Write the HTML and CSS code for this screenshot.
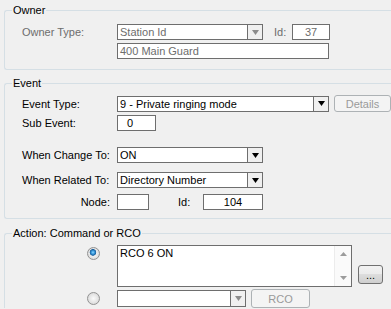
FILE: index.html
```html
<!DOCTYPE html>
<html>
<head>
<title>Event Action</title>
<link rel="stylesheet" href="styles.css">
</head>
<body>
<fieldset class="group owner">
	<legend>Owner</legend>
	<div class="row">
		<span class="label off">Owner Type:</span>
		<div class="combo off w146">
			<span class="val">Station Id</span>
			<span class="arrow"><svg width="7" height="5" viewBox="0 0 7 5"><polygon points="0,0 7,0 3.5,5"/></svg></span>
		</div>
		<span class="idlbl off">Id:</span>
		<div class="box off center w38">37</div>
	</div>
	<div class="row r2">
		<span class="label"></span>
		<div class="box off w212">400 Main Guard</div>
	</div>
</fieldset>

<fieldset class="group event">
	<legend>Event</legend>
	<div class="row tall">
		<span class="label">Event Type:</span>
		<div class="combo w212">
			<span class="val">9 - Private ringing mode</span>
			<span class="arrow"><svg width="7" height="5" viewBox="0 0 7 5"><polygon points="0,0 7,0 3.5,5"/></svg></span>
		</div>
		<button class="btn off details">Details</button>
	</div>
	<div class="row r-sub">
		<span class="label">Sub Event:</span>
		<div class="box w39 padl">0</div>
	</div>
	<div class="row r-change">
		<span class="label">When Change To:</span>
		<div class="combo w146">
			<span class="val">ON</span>
			<span class="arrow"><svg width="7" height="5" viewBox="0 0 7 5"><polygon points="0,0 7,0 3.5,5"/></svg></span>
		</div>
	</div>
	<div class="row r-related">
		<span class="label">When Related To:</span>
		<div class="combo w146">
			<span class="val">Directory Number</span>
			<span class="arrow"><svg width="7" height="5" viewBox="0 0 7 5"><polygon points="0,0 7,0 3.5,5"/></svg></span>
		</div>
	</div>
	<div class="row r-node">
		<span class="label right">Node:</span>
		<div class="box w32"></div>
		<span class="idlbl2">Id:</span>
		<div class="box center w60">104</div>
	</div>
</fieldset>

<fieldset class="group action">
	<legend>Action: Command or RCO</legend>
	<div class="arow">
		<span class="rcell"><span class="radio on"></span></span>
		<div class="memo">
			<div class="memotext">RCO 6 ON</div>
			<div class="scroll">
				<span class="sarrow"><svg width="7" height="4" viewBox="0 0 7 4"><polygon points="3.5,0 7,4 0,4"/></svg></span>
				<span class="sarrow"><svg width="7" height="4" viewBox="0 0 7 4"><polygon points="0,0 7,0 3.5,4"/></svg></span>
			</div>
		</div>
		<button class="btn dots">...</button>
	</div>
	<div class="arow a2">
		<span class="rcell"><span class="radio"></span></span>
		<div class="combo off w129 h17">
			<span class="val"></span>
			<span class="arrow"><svg width="7" height="5" viewBox="0 0 7 5"><polygon points="0,0 7,0 3.5,5"/></svg></span>
		</div>
		<button class="btn off rco">RCO</button>
	</div>
</fieldset>
</body>
</html>
```

FILE: styles.css
```css
* {
	box-sizing: border-box;
}
html, body {
	overflow: hidden;
}
body {
	margin: 0;
	width: 391px;
	height: 309px;
	background-color: #f0f0f0;
	font-family: "Liberation Sans", Arial, sans-serif;
	font-size: 11px;
	color: #000;
}
.group {
	margin: 0 0 0 4px;
	padding: 0 0 10px 17px;
	border: 1px solid #d5dfe5;
	border-right: none;
	border-radius: 3px 0 0 3px;
	min-width: 0;
}
.group legend {
	margin-left: -10px;
	padding: 0 1px;
	line-height: 13px;
}
.owner {
	margin-top: 4px;
	padding-top: 7px;
}
.event {
	margin-top: 7px;
	padding-top: 5px;
	padding-bottom: 8px;
}
.action {
	margin-top: 8px;
	padding-top: 5px;
	padding-bottom: 0;
	border-bottom: none;
	border-radius: 3px 0 0 0;
}
.row {
	display: flex;
	align-items: center;
	height: 16px;
}
.row.r2 {
	margin-top: 3px;
}
.row.tall {
	height: 17px;
}
.row.r-sub {
	margin-top: 3px;
}
.row.r-change {
	margin-top: 16px;
}
.row.r-related {
	margin-top: 9px;
}
.row.r-node {
	margin-top: 6px;
}
.label {
	width: 95px;
	flex: none;
}
.label.right {
	text-align: right;
	padding-right: 7px;
}
.off {
	color: #6d6d6d;
}
.box, .combo {
	height: 16px;
	border: 1px solid #6e6e6e;
	background: #fff;
	line-height: 14px;
	flex: none;
}
.box {
	padding: 0 2px;
	white-space: nowrap;
}
.box.center {
	text-align: center;
}
.box.padl {
	padding-left: 9px;
}
.combo {
	display: flex;
}
.combo .val {
	flex: 1;
	padding: 0 2px;
	white-space: nowrap;
	overflow: hidden;
}
.combo .arrow {
	width: 15px;
	border-left: 1px solid #6e6e6e;
	background: #f0f0f0;
	display: flex;
	align-items: center;
	justify-content: center;
}
.combo .arrow svg {
	fill: #000;
}
.combo.off .arrow svg {
	fill: #8c8c8c;
}
.h17 {
	height: 17px;
}
.w32 { width: 32px; }
.w38 { width: 38px; }
.w39 { width: 39px; }
.w60 { width: 60px; }
.w129 { width: 129px; }
.w146 { width: 146px; }
.w212 { width: 212px; }
.idlbl {
	margin-left: 11px;
	width: 18px;
}
.idlbl2 {
	margin-left: 29px;
	width: 25px;
}
.btn {
	font-family: inherit;
	font-size: 11px;
	padding: 0;
	border-radius: 3px;
	border: 1px solid #707070;
	background: linear-gradient(#f2f2f2 0%, #ebebeb 50%, #dddddd 50%, #cfcfcf 100%);
	color: #000;
	flex: none;
}
.btn.off {
	border-color: #adb2b5;
	background: #f4f4f4;
	color: #9a9a9a;
}
.details {
	margin-left: 5px;
	width: 57px;
	height: 17px;
}
.arow {
	display: flex;
	align-items: flex-start;
}
.arow.a2 {
	margin-top: 2px;
	align-items: center;
	height: 19px;
}
.rcell {
	width: 95px;
	flex: none;
	padding-left: 65px;
}
.radio {
	display: block;
	width: 13px;
	height: 13px;
	border-radius: 50%;
	border: 1px solid #929292;
	background: radial-gradient(circle at 50% 50%, #fafafa 0, #e2e2e2 60%, #c9c9c9 100%);
}
.arow .rcell .radio.on {
	margin-top: 2px;
	background:
		radial-gradient(circle at 45% 40%, #8fd6ff 0, #3c9ee0 1.5px, #1a5f9c 3px, transparent 3.6px),
		radial-gradient(circle at 50% 50%, #ffffff 0, #e4e4e4 60%, #cbcbcb 100%);
}
.memo {
	width: 235px;
	height: 42px;
	border: 1px solid #6e6e6e;
	background: #fff;
	display: flex;
	flex: none;
}
.memotext {
	flex: 1;
	padding: 1px 2px;
	line-height: 13px;
}
.scroll {
	width: 17px;
	border-left: 1px solid #ececec;
	background: #fafafa;
	display: flex;
	flex-direction: column;
	justify-content: space-between;
	align-items: center;
	padding: 6px 0 6px;
}
.sarrow {
	display: block;
	height: 4px;
}
.sarrow svg {
	display: block;
	fill: #9c9c9c;
}
.dots {
	margin-left: 6px;
	margin-top: 20px;
	width: 25px;
	height: 19px;
	line-height: 10px;
}
.rco {
	margin-left: 5px;
	width: 59px;
	height: 19px;
}
```
